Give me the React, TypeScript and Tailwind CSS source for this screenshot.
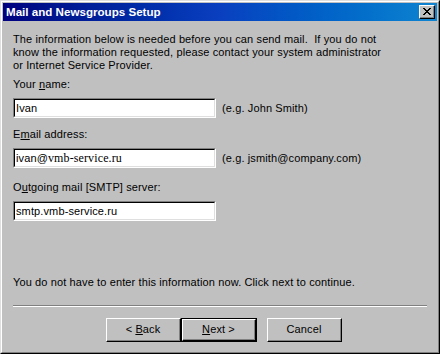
import React from "react";

const sans = { fontFamily: '"Liberation Sans", Arial, sans-serif' };

function Sunken({ children }: { children?: React.ReactNode }) {
  return (
    <div className="w-[203px] border-t border-l border-t-[#808080] border-l-[#808080] border-b border-r border-b-white border-r-white">
      <div className="h-[18px] bg-white border-t border-l border-t-black border-l-black border-b border-r border-b-[#dfdfdf] border-r-[#dfdfdf] flex items-center pl-[1px] text-[11px] text-black leading-none">
        <span>{children}</span>
      </div>
    </div>
  );
}

function Btn({ children, def }: { children: React.ReactNode; def?: boolean }) {
  const inner = (
    <div className="w-full h-full border-t border-l border-t-white border-l-white border-b border-r border-b-black border-r-black">
      <div className="w-full h-full border-b border-r border-b-[#808080] border-r-[#808080] flex items-center justify-center text-[11px] text-black">
        <span className="whitespace-pre">{children}</span>
      </div>
    </div>
  );
  if (def)
    return <div className="w-[76px] h-[24px] border border-black">{inner}</div>;
  return <div className="w-[75px] h-[24px]">{inner}</div>;
}

export default function App() {
  return (
    <div style={sans} className="w-[440px] h-[354px] bg-[#c0c0c0] border-t border-l border-t-[#dfdfdf] border-l-[#dfdfdf] border-b border-r border-b-black border-r-black">
      <div className="w-full h-full border-t border-l border-t-white border-l-white border-b border-r border-b-[#808080] border-r-[#808080] p-[1px] flex flex-col">
        <div className="h-[18px] bg-linear-to-r from-[#000080] via-[#0a3fbf] to-[#1084d0] flex items-center justify-between pl-[3px] pr-[2px]">
          <span className="text-white font-bold text-[11.6px]">Mail and Newsgroups Setup</span>
          <div className="w-[16px] h-[14px] bg-[#c0c0c0] border-t border-l border-t-white border-l-white border-b border-r border-b-black border-r-black">
            <div className="w-full h-full border-b border-r border-b-[#808080] border-r-[#808080] flex items-center justify-center">
              <svg width="8" height="7" viewBox="0 0 8 7">
                <path d="M0 0h2v1h-2zM6 0h2v1h-2zM1 1h2v1h-2zM5 1h2v1h-2zM2 2h4v1h-4zM3 3h2v1h-2zM2 4h4v1h-4zM1 5h2v1h-2zM5 5h2v1h-2zM0 6h2v1h-2zM6 6h2v1h-2z" fill="black" />
              </svg>
            </div>
          </div>
        </div>
        <div className="flex-1 flex flex-col pl-[10px] pr-[8px] text-[11px] leading-[13px] tracking-[0.12px] text-black">
          <p className="mt-[12px]">
            The information below is needed before you can send mail.&nbsp; If you do not
            <br />
            know the information requested, please contact your system administrator
            <br />
            or Internet Service Provider.
          </p>
          <div className="mt-[6px]">
            Your <span className="underline">n</span>ame:
          </div>
          <div className="mt-[7px] flex items-center gap-[6px]">
            <Sunken>Ivan</Sunken>
            <span>(e.g. John Smith)</span>
          </div>
          <div className="mt-[10px]">
            E<span className="underline">m</span>ail address:
          </div>
          <div className="mt-[7px] flex items-center gap-[6px]">
            <Sunken>
              ivan@<span style={{ fontFamily: '"Liberation Serif", serif' }} className="text-[12px]">vmb-service.ru</span>
            </Sunken>
            <span>(e.g. jsmith@company.com)</span>
          </div>
          <div className="mt-[13px]">
            O<span className="underline">u</span>tgoing mail [SMTP] server:
          </div>
          <div className="mt-[7px] flex items-center gap-[6px]">
            <Sunken>smtp.vmb-service.ru</Sunken>
          </div>
          <div className="mt-[55px]">You do not have to enter this information now. Click next to continue.</div>
          <div className="mt-[16px] w-[414px] border-t border-t-[#808080] border-b border-b-white"></div>
          <div className="mt-[11px] flex pl-[93px]">
            <Btn>
              {"< "}<span className="underline">B</span>ack
            </Btn>
            <Btn def>
              <span className="underline">N</span>{"ext >"}
            </Btn>
            <div className="w-[10px]"></div>
            <Btn>Cancel</Btn>
          </div>
        </div>
      </div>
    </div>
  );
}
